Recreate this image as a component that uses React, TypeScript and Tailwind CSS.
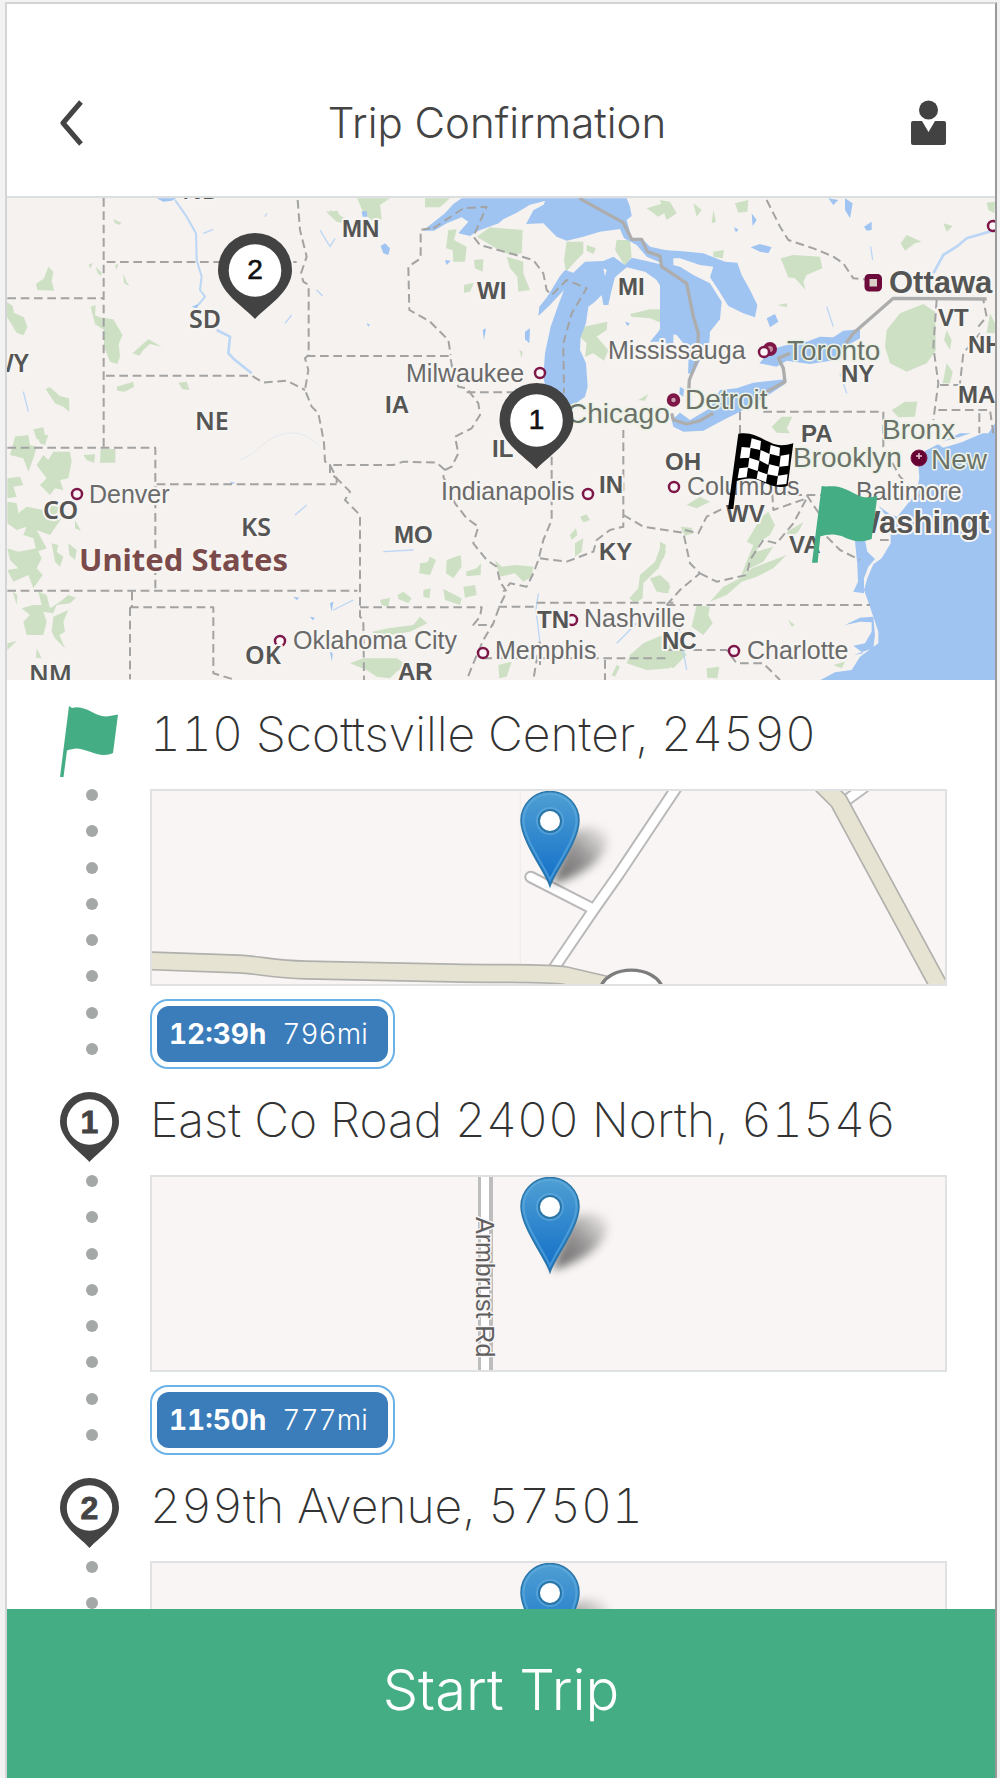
import { useId } from "react";

type Label = { t: string; x: number; y: number };

const statesSans: Label[] = [
  { t: "MN", x: 342, y: 237 },
  { t: "WI", x: 477, y: 299 },
  { t: "MI", x: 618, y: 295 },
  { t: "IA", x: 385, y: 413 },
  { t: "IL", x: 492, y: 457 },
  { t: "IN", x: 599, y: 493 },
  { t: "MO", x: 394, y: 543 },
  { t: "KY", x: 599, y: 560 },
  { t: "TN", x: 537, y: 628 },
  { t: "AR", x: 398, y: 680 },
  { t: "OH", x: 665, y: 470 },
  { t: "PA", x: 801, y: 442 },
  { t: "NY", x: 841, y: 382 },
  { t: "VT", x: 938, y: 326 },
  { t: "NH", x: 968, y: 353 },
  { t: "MA", x: 958, y: 403 },
  { t: "WV", x: 726, y: 522 },
  { t: "VA", x: 789, y: 553 },
  { t: "NC", x: 662, y: 649 },
];

const statesHumanist: Label[] = [
  { t: "ND", x: 182, y: 199 },
  { t: "SD", x: 189, y: 328 },
  { t: "NE", x: 195, y: 430 },
  { t: "WY", x: -10, y: 372 },
  { t: "CO", x: 43, y: 519 },
  { t: "KS", x: 241, y: 536 },
  { t: "OK", x: 245, y: 664 },
  { t: "NM", x: 29, y: 683 },
];

const cities: Label[] = [
  { t: "Milwaukee", x: 406, y: 382 },
  { t: "Mississauga", x: 608, y: 359 },
  { t: "Indianapolis", x: 441, y: 500 },
  { t: "Columbus", x: 687, y: 495 },
  { t: "Baltimore", x: 856, y: 500 },
  { t: "Denver", x: 89, y: 503 },
  { t: "Oklahoma City", x: 293, y: 649 },
  { t: "Memphis", x: 495, y: 659 },
  { t: "Nashville", x: 584, y: 627 },
  { t: "Charlotte", x: 747, y: 659 },
];

const bigCities: Label[] = [
  { t: "Chicago", x: 567, y: 423 },
  { t: "Toronto", x: 787, y: 360 },
  { t: "Detroit", x: 685, y: 409 },
  { t: "Brooklyn", x: 793, y: 467 },
  { t: "Bronx", x: 882, y: 439 },
  { t: "New", x: 931, y: 469 },
];

const rings: [number, number][] = [
  [540, 373],
  [588, 494],
  [674, 487],
  [77, 494],
  [280, 641],
  [483, 653],
  [572, 620],
  [734, 651],
  [993, 226],
];

const LAND = "#f5f2ef";
const WATER = "#9fc4f2";
const PARK = "#cde0c4";

function NumberPin({ x, y, n }: { x: number; y: number; n: string }) {
  return (
    <g transform={`translate(${x} ${y})`}>
      <path d="M0 49C-12 36-37 22-37 0A37 37 0 0 1 37 0C37 22 12 36 0 49Z" fill="#424242" />
      <circle cx="0" cy="0.5" r="26.3" fill="#fff" />
      <text x="0" y="9" textAnchor="middle" fontSize="28" fill="#111" stroke="#111" strokeWidth="0.6">
        {n}
      </text>
    </g>
  );
}

function OverviewMap() {
  return (
    <svg
      viewBox="7 198 988 482"
      className="block w-full font-['Liberation_Sans',sans-serif]"
      role="img"
      aria-label="Route overview map"
    >
      <rect x="0" y="190" width="1000" height="500" fill={LAND} />

      <g transform="scale(0.33333)">
        {/* Parks and forests */}
        <g fill={PARK}>
          <g transform="translate(0 570)">
            <path d="M145 230L160 245 155 275 163 302 112 300 108 282 132 265ZM20 335L38 348 42 368 72 382 82 412 70 436 50 428 30 395 20 380ZM272 350L287 345 285 375 298 382 340 388 368 435 356 462 360 500 352 522 330 515 312 470 312 420 285 402ZM398 490L425 465 445 448 485 470 450 462 430 480 418 497ZM340 88L365 98 358 104 345 100ZM265 225L278 218 272 235ZM288 230L305 248 303 258 292 248ZM370 250L380 275 388 288 372 280ZM345 225L355 222 350 240ZM137 597L150 592 180 618 207 625 208 665 190 650 165 640ZM350 590L400 575 402 590 375 605 352 602ZM535 578L560 575 568 600 548 598ZM100 718L130 712 137 745 110 748ZM978 65L1012 62 1030 100 1010 95ZM45 738L72 742 60 752Z" />
          </g>
          <g transform="translate(990 570)">
            <path d="M82 25L180 25 150 45 155 88 125 90 100 70ZM285 25L360 25 330 52 285 52ZM0 60L45 85 30 92 5 80ZM355 120L380 118 372 150 410 170 405 215 370 215 368 180 348 175ZM432 210L460 208 458 245 435 235ZM440 140L480 112 578 120 575 190 540 195 490 170ZM530 200L580 215 580 250 600 300 565 305 562 260 540 235ZM402 285L432 278 420 305 402 308ZM710 155L760 155 760 190 735 215 708 245 702 210ZM770 165L798 175 790 192 770 182ZM860 150L900 150 905 200 885 228 855 180ZM755 412L832 395 830 420 800 440 835 480 822 512 790 490 765 500 770 460 750 440ZM900 372L960 358 995 358 993 398 960 385 905 380ZM568 480L578 485 575 505ZM950 55L1000 40 1010 65 985 80ZM925 630L955 612 945 632Z" />
          </g>
          <g transform="translate(1980 570)">
            <path d="M362 205L400 195 480 200 487 235 440 255 430 275 437 300 405 265 385 262ZM722 160L740 135 785 155 765 160 735 182ZM680 420L720 370 790 342 825 365 828 480 800 520 740 545 690 520 675 470ZM225 40L265 30 262 65 235 68ZM850 100L878 108 860 125ZM980 38L1005 35 1003 70 985 60ZM160 185L192 180 188 205 160 200ZM0 350L15 370 12 400 0 405ZM860 420L875 450 870 480 852 450ZM860 520L878 545 870 580 848 580ZM990 370L1005 400 1005 430 980 428ZM695 660L735 635 772 635 765 680 715 682ZM335 710L365 680 397 680 380 715 390 730 350 728ZM352 345L382 340 380 352ZM0 30L30 35 50 70 20 90ZM100 40L125 60 110 80ZM160 60L168 95 155 100Z" />
          </g>
          <g transform="translate(0 1305)">
            <path d="M45 5L85 0 90 30 110 35 100 70 85 110 70 70 30 60ZM110 0L145 0 135 30 120 25ZM110 90L130 60 145 75 160 50 210 50 215 80 205 130 180 135 190 165 165 160 150 180 120 150 140 130ZM22 130L60 125 70 150 40 155 50 185 22 190ZM22 200L50 205 55 235 80 215 130 225 140 200 180 210 160 260 185 250 150 300 110 285 140 340 110 350 100 310 70 300 80 275 50 285 22 265ZM22 340L55 350 110 340 125 370 110 400 128 420 100 460 85 420 40 440 22 405 55 400 30 375ZM155 325L175 330 170 350 190 365 180 395 165 380ZM205 325L230 345 225 375 208 360ZM250 60L285 58 283 84 260 75ZM302 42L346 42 346 83 300 83ZM225 255L243 288 225 280ZM38 470L52 480 50 510ZM115 470L140 480 150 520 180 500 205 480 228 488 210 505 170 510 160 535 130 530 140 560 130 600 80 600 70 560 90 540 65 520 100 510 125 510ZM160 545L205 525 190 560 195 590 178 600 195 640 165 610 155 590ZM110 640L125 670 108 668ZM22 625L50 618 22 645Z" />
          </g>
          <g transform="translate(990 1305)">
            <path d="M270 385L292 382 300 365 318 375 300 420 268 415ZM350 375L392 360 395 395 370 430 348 415ZM408 410L440 400 453 385 452 420 410 424ZM400 455L435 450 440 480 405 488ZM340 462L395 490 390 510 345 495ZM280 465L302 460 298 490 280 485ZM203 480L220 470 245 490 235 505 205 492ZM150 495L180 488 175 515 155 510ZM495 375L515 395 560 390 610 395 605 425 580 440 555 415 510 425ZM720 300L738 280 742 300 725 315ZM735 325L760 310 755 350 735 365ZM750 245L770 238 780 255 760 262ZM60 685L100 670 200 670 230 690 200 710 180 730 140 725 110 705ZM128 590L175 580 250 570 270 545 292 565 240 590 180 600 130 598ZM505 690L545 680 530 725 508 730ZM930 420L975 380 995 325 1008 350 985 400 940 445 938 490 915 505 898 490 925 460ZM960 430L990 420 1018 445 1015 475 980 470ZM900 660L940 625 1020 590 1020 700 950 705 890 685ZM845 720L860 690 870 695 855 725Z" />
          </g>
          <g transform="translate(1980 1305)">
            <path d="M62 275L95 278 100 295 75 302ZM80 210L120 185 150 200 110 220ZM305 245L325 230 345 270 330 300 300 320 290 350 340 335 310 380 270 400 240 430 275 400 380 360 340 400 290 425 245 440 200 480 150 500 190 455 240 430 280 330 260 320ZM380 290L430 262 415 290 385 312ZM0 320L18 330 12 370 0 370ZM0 425L32 455 20 475 0 470ZM110 510L150 515 145 540 158 565 130 600 95 575ZM0 625L60 630 80 660 40 700 0 685ZM140 700L178 695 172 730 142 728ZM520 690L555 680 545 700ZM385 555L405 570 395 575Z" />
          </g>
        </g>

        {/* Lakes and ocean */}
        <g fill={WATER}>
          <g transform="translate(990 570)">
            <path d="M395 25L370 42 345 70 300 105 280 122 312 122 350 100 395 82 415 95 385 130 420 138 445 122 500 102 560 88 592 50 645 34 640 44 610 60 588 102 640 100 680 140 710 152 760 140 810 125 870 117 882 145 920 165 950 200 985 215 1030 240 1030 185 960 170 940 150 905 145 890 90 905 78 900 50 890 25Z" />
            <path d="M625 378L628 350 652 320 690 258 705 240 730 248 765 215 820 213 850 200 885 225 905 203 960 215 1030 232 1030 480 1005 455 960 455 985 425 1008 385 1010 320 980 270 945 245 890 232 855 262 845 300 835 345 820 345 815 315 795 335 775 350 768 400 752 440 750 480 768 520 773 590 765 620 735 642 715 690 660 660 640 560 645 490 662 410 685 345 702 300 660 345Z" />
            <path d="M152 168L165 160 180 175 175 195 160 190ZM95 65L110 62 112 80 98 80ZM585 425L600 415 598 460 585 448ZM458 420L468 415 462 450ZM345 210L362 212 350 225ZM110 400L120 404 115 410ZM885 395L900 400 892 408Z" />
            <path d="M820 235L830 240 825 258Z" fill={LAND} />
            <path d="M560 68L600 44 645 33 640 44 610 60 588 102 555 100 500 105 520 88Z" fill={LAND} />
          </g>
          <g transform="translate(1980 570)">
            <path d="M0 180L60 183 130 190 195 215 232 218 245 255 270 300 292 345 285 382 250 370 205 348 172 295 150 262 160 230 120 225 60 205 0 205Z" />
            <path d="M0 215L60 230 100 255 150 280 185 335 180 388 150 425 148 455 125 500 100 552 84 550 86 500 70 460 50 435 20 430 0 445Z" />
            <path d="M35 690L60 668 90 690 150 655 180 600 230 595 280 578 375 568 375 582 330 612 240 665 190 690 130 722 70 725 40 710Z" />
            <path d="M298 520L320 495 345 475 400 460 440 455 480 440 520 442 550 422 600 418 600 445 565 465 540 508 450 522 380 512 350 530ZM60 590L72 598 70 620 58 612Z" />
            <path d="M272 172L300 162 335 172 325 190 300 185ZM320 385L345 372 355 395 330 412ZM555 25L578 40 570 85 555 60ZM612 110L635 95 635 120 620 122ZM275 70L290 90 278 108ZM222 112L235 118 228 128ZM505 25L535 30 520 45Z" />
          </g>
          <g transform="translate(1980 1305)">
            <path d="M1005 -35L985 -5 900 -5 830 30 795 48 775 85 778 130 768 175 740 210 712 245 690 238 655 212 692 260 692 325 665 370 640 388 622 430 612 465 628 510 640 545 655 590 655 625 600 665 575 705 525 712 480 736 1010 736Z" />
            <path d="M583 295L587 340 592 390 594 440 580 470 612 475 612 430 625 395 645 372 622 350 612 300ZM555 570L600 560 635 562 635 590 615 625 580 632 610 655 580 660 640 640 645 600 640 545 600 548Z" />
          </g>
          <g transform="translate(0 1305)">
            <path d="M690 140L705 143 695 148ZM880 485L898 488 890 495ZM930 545L945 548 938 556ZM990 505L1000 500 995 530ZM990 650L998 655 996 680Z" />
          </g>
          <g transform="translate(0 570)">
            <path d="M470 25L530 25 515 32 490 35ZM575 350L600 340 590 355Z" />
          </g>
        </g>
        <g transform="translate(1980 1305)" fill={LAND}>
          <path d="M830 25L900 5 960 -15 975 -8 905 22 850 38Z" />
        </g>

        {/* Rivers */}
        <g fill="none" stroke="#bcd6f5" strokeWidth="6" strokeLinejoin="round">
          <path d="M525 600L560 650 588 700 590 780 605 830 600 870 615 890 595 915" />
          <path d="M650 990L690 1010 685 1060 705 1080 755 1120" strokeWidth="8" />
          <path d="M2800 820L2830 765 2870 740 2900 715 2985 690" strokeWidth="8" />
          <path d="M610 700L640 688M800 640L795 650M960 690L990 740 1005 715M855 970L875 945M70 1175L85 1235M950 870L968 888M1615 1780L1608 1830 1620 1930M1850 1930L1920 1860M1000 1830L1060 1800M1150 1655L1240 1650M885 1545L920 1515M2035 1875L2060 2010M2612 740L2618 780M2480 920L2500 980M2520 1120L2540 1180" strokeWidth="4" />
          <path d="M720 1380C780 1360 790 1310 860 1300C900 1295 930 1310 960 1340" stroke="#e3e9ef" strokeWidth="3" />
        </g>

        {/* National border */}
        <g fill="none" stroke="#adadad" strokeWidth="10" strokeLinejoin="round">
          <path d="M1738 595L1870 668 1895 718 1925 718 1942 755 1980 768 1985 800 2060 850 2080 950 2095 1000 2092 1080 2068 1140 2065 1200" />
          <path d="M2015 1240L2020 1260 2060 1272 2100 1262 2140 1240" />
          <path d="M2300 1175L2355 1145 2350 1105 2335 1075 2370 1060" />
          <path d="M2538 1030L2560 1000 2680 895 2960 897" />
        </g>

        {/* State borders */}
        <g fill="none" stroke="#a3a3a3" strokeWidth="6" strokeDasharray="26 14" strokeLinejoin="round">
          <path d="M311 594V1340M22 895H311M320 786H890M318 1127H755L790 1148 860 1142 915 1170" />
          <path d="M893 600L900 690 920 770 903 820 910 845 926 855V1065L915 1075 925 1110 915 1170 935 1220 955 1240 965 1290 972 1330 975 1385 990 1390V1420L1010 1435 1010 1452" />
          <path d="M920 1068H1350L1362 1130 1375 1160 1400 1165 1435 1210 1440 1245 1415 1285 1365 1310 1375 1360 1355 1400 1335 1410 1330 1430 1365 1510 1400 1555 1435 1580 1420 1630 1460 1680 1490 1700 1500 1745 1520 1775 1500 1815 1480 1870 1450 1920 1420 1990 1400 2040" />
          <path d="M1290 685L1262 690V775L1225 800 1228 930 1290 965 1345 1020 1352 1065" />
          <path d="M1300 685L1390 625 1460 620 1420 710 1440 735 1530 760 1600 780 1630 820 1640 870 1655 885 1700 840 1760 865 1715 940 1690 1030 1692 1180M1400 1177H1640" />
          <path d="M22 1343H466V1772M470 1453H1010M22 1772H1072M396 1775V1820M390 1822H640V2020L700 2038M390 1822V2038" />
          <path d="M990 1395L1010 1435 1050 1475 1035 1500 1080 1545V1850L1090 1860 1092 2040M1000 1395H1180L1210 1385 1310 1388 1335 1410" />
          <path d="M1080 1822H1445L1440 1850 1420 1875 1480 1875M1495 1820H1610M1610 1808L2020 1808M1620 1995V1920L1610 1980 1600 2040M1450 1975H2000" />
          <path d="M1655 1370V1560L1630 1620 1615 1680 1600 1720 1580 1760 1530 1750 1510 1775M1620 1675L1700 1685 1780 1655 1790 1620 1830 1590 1870 1580V1290" />
          <path d="M1870 1545L1930 1580 2050 1598 2070 1690 2100 1720 2040 1770 2000 1815M2055 1590L2095 1600 2120 1550 2190 1515M2100 1720L2150 1745 2240 1725 2250 1680 2290 1620 2330 1630 2380 1570 2420 1495 2320 1530 2310 1370" />
          <path d="M2000 1815H2610M2220 1235V1300M2290 1235H2650V1340L2700 1430 2770 1500M2420 1485L2460 1545M2340 1485H2540M2480 1610L2520 1650 2580 1680M2640 1620H2680" />
          <path d="M2300 600L2340 680 2365 720 2440 745 2500 770 2530 790 2560 835 2610 840M2810 900L2800 1040 2815 1150 2800 1260M2820 1155H2900M2815 1230H2970L2980 1300M2940 1000L2890 1060 2880 1150M2935 980L2960 950 2950 900M2938 1240V1300" />
          <path d="M1815 1980V2040M2000 1950H2180L2210 1990 2290 1990 2340 2040" />
        </g>
      </g>

      {/* City dots */}
      <g fill="#fbf5f7" stroke="#7d1748" strokeWidth="2.5">
        {rings.map(([x, y]) => (
          <circle key={`${x}-${y}`} cx={x} cy={y} r="5" />
        ))}
        <circle cx="770" cy="349" r="5" fill="#c48a9f" strokeWidth="4" />
        <circle cx="764" cy="352" r="5" />
        <circle cx="673.500" cy="400" r="4.500" fill="#c9a3b2" strokeWidth="4.500" />
        <circle cx="919" cy="458" r="8" fill="#660033" strokeWidth="1" />
        <path d="M916 456h6M919 453v6" stroke="#e7c6d3" strokeWidth="1.500" />
        <rect x="867" y="276.500" width="12.500" height="12.500" rx="2" fill="#d8cfc8" stroke="#6b0a3b" strokeWidth="5" />
      </g>

      {/* Labels */}
      <g stroke="#f7f5f2" strokeWidth="4" strokeLinejoin="round" className="[paint-order:stroke]">
        <g fontSize="25" fill="#6a6a6a">
          {cities.map((l) => (
            <text key={l.t} x={l.x} y={l.y}>{l.t}</text>
          ))}
        </g>
        <g fontSize="28" fill="#6b726a" stroke="#edf2e6" strokeWidth="3">
          {bigCities.map((l) => (
            <text key={l.t} x={l.x} y={l.y}>{l.t}</text>
          ))}
        </g>
        <g fontSize="24" fontWeight="700" fill="#555">
          {statesSans.map((l) => (
            <text key={l.t} x={l.x} y={l.y}>{l.t}</text>
          ))}
        </g>
        <g fontSize="25" fontWeight="600" fill="#555" className="font-['Noto_Sans',sans-serif]">
          {statesHumanist.map((l) => (
            <text key={l.t} x={l.x} y={l.y}>{l.t}</text>
          ))}
        </g>
        <g fontSize="31" fontWeight="700" fill="#555">
          <text x="889" y="293">Ottawa</text>
          <text x="851" y="533">Washingt</text>
        </g>
        <text x="79" y="571" fontSize="31" fontWeight="700" fill="#7b4b4b" className="font-['Noto_Sans',sans-serif]">
          United States
        </text>
      </g>

      <NumberPin x={255} y={270} n="2" />
      <NumberPin x={536.500} y={420} n="1" />

      <g transform="translate(660 435) scale(0.33333)">
        <path d="M235 -4C280 -10 300 10 330 22C355 35 375 32 400 25L383 152C355 162 335 152 310 142C280 125 255 130 230 138L220 222H204Z" fill="#000" />
        <path
          d="M275 10L303 18 300 45 270 38ZM332 30L360 38 358 64 328 56ZM245 36L272 38 268 68 240 70ZM302 45L330 58 325 90 298 76ZM362 62L388 58 385 92 358 95ZM268 68L298 78 293 108 264 98ZM328 88L358 95 353 124 322 118ZM238 100L264 97 260 127 233 130ZM294 108L322 118 318 142 290 131ZM354 122L383 118 379 147 350 150Z"
          fill="#fff"
        />
        <path d="M485 153C500 157 520 150 545 158C580 170 600 190 628 187L652 184 635 312C600 325 575 318 545 303C520 295 500 298 481 304L473 383H456Z" fill="#44ad84" />
      </g>
    </svg>
  );
}

function FlagIcon() {
  return (
    <svg viewBox="0 0 59 71" className="block h-[71px] w-[59px]" role="img" aria-label="Start">
      <path
        d="M9 0L12 2C27-2 35 13 50 10L58 8.500 53 47C40 53 28 43 17 42.500C13 42.500 10 43.500 7 44.500L3.500 71H0Z"
        fill="#44ad84"
      />
    </svg>
  );
}

function StopPin({ n }: { n: string }) {
  return (
    <svg
      viewBox="0 0 60 71"
      className="block h-[71px] w-[60px] font-['Liberation_Sans',sans-serif]"
      role="img"
      aria-label={`Stop ${n}`}
    >
      <path d="M29.500 70C22 61 0 48 0 29.500A29.500 29.500 0 0 1 59 29.500C59 48 37 61 29.500 70Z" fill="#444" />
      <circle cx="29.500" cy="30" r="22.700" fill="#fff" />
      <text x="29.500" y="41" textAnchor="middle" fontSize="32" fontWeight="700" fill="#444" stroke="#444" strokeWidth="0.8">
        {n}
      </text>
    </svg>
  );
}

function BluePin() {
  const id = useId();
  return (
    <g transform="translate(398 0)">
      <defs>
        <linearGradient id={`${id}g`} x1="0" y1="0" x2="0" y2="1">
          <stop offset="0" stopColor="#4f9fd3" />
          <stop offset="1" stopColor="#126fc8" />
        </linearGradient>
        <linearGradient id={`${id}s`} x1="0" y1="1" x2="1" y2="0">
          <stop offset="0" stopColor="#000" stopOpacity="0.6" />
          <stop offset="0.5" stopColor="#000" stopOpacity="0.4" />
          <stop offset="1" stopColor="#000" stopOpacity="0" />
        </linearGradient>
        <filter id={`${id}b`} x="-40%" y="-40%" width="180%" height="180%">
          <feGaussianBlur stdDeviation="5" />
        </filter>
      </defs>
      <path d="M2 93L18 48C28 30 60 34 58 50C54 72 26 87 2 93Z" fill={`url(#${id}s)`} filter={`url(#${id}b)`} />
      <path
        d="M0 95C-4 82-29 50-29 29.500A29 29 0 0 1 29 29.500C29 50 4 82 0 95Z"
        fill={`url(#${id}g)`}
        stroke="#2b76a8"
        strokeWidth="1.500"
      />
      <path d="M0 89C-5 76-26.500 48-26.500 29.500A26.500 26.500 0 0 1 26.500 29.500C26.500 48 5 76 0 89Z" fill="none" stroke="#62aee0" strokeOpacity="0.6" strokeWidth="2" />
      <circle cx="0" cy="30" r="13" fill="none" stroke="#62aee0" strokeOpacity="0.6" strokeWidth="2" />
      <circle cx="0" cy="30" r="11" fill="#fff" stroke="#2b76a8" strokeWidth="2" />
    </g>
  );
}

function ScottsvilleRoads() {
  return (
    <g transform="scale(0.33333)" fill="none" strokeLinejoin="round">
      <path d="M1105 0V580" stroke="#ececea" strokeWidth="3" />
      <g stroke="#b9b9b9" strokeWidth="38" strokeLinecap="round">
        <path d="M1580 -20L1400 250 1326 355 1200 540M1326 355L1136 258M2080 30L2135 -10" />
      </g>
      <g stroke="#fff" strokeWidth="26" strokeLinecap="round">
        <path d="M1580 -20L1400 250 1326 355 1200 540M1326 355L1136 258M2080 30L2135 -10" />
      </g>
      <g stroke="#b0b0ac" strokeWidth="58">
        <path d="M-20 509L260 519C320 522 370 535 460 537L900 546C1050 549 1190 545 1240 554L1420 596M2000 -30L2060 30 2160 215 2390 640" />
      </g>
      <g stroke="#e6e3d2" strokeWidth="48">
        <path d="M-20 509L260 519C320 522 370 535 460 537L900 546C1050 549 1190 545 1240 554L1420 596M2000 -30L2060 30 2160 215 2390 640" />
      </g>
      <path d="M1345 590C1370 520 1505 520 1532 590Z" fill="#fff" stroke="#7d7d7d" strokeWidth="10" />
    </g>
  );
}

function ArmbrustRoad() {
  return (
    <g>
      <rect x="326" y="-2" width="15" height="200" fill="#bdbdbd" />
      <rect x="329" y="-2" width="8" height="200" fill="#fff" />
      <text
        transform="translate(324 40) rotate(90)"
        fontSize="25"
        fill="#5f5f5f"
        stroke="#f9f5f5"
        strokeWidth="3"
        className="font-['Liberation_Sans',sans-serif] [paint-order:stroke]"
      >
        Armbrust Rd
      </text>
    </g>
  );
}

type Stop = {
  address: string;
  marker: React.ReactNode;
  roads?: React.ReactNode;
  time: string;
  miles: string;
};

const stops: Stop[] = [
  { address: "110 Scottsville Center, 24590", marker: <FlagIcon />, roads: <ScottsvilleRoads />, time: "12:39h", miles: "796mi" },
  { address: "East Co Road 2400 North, 61546", marker: <StopPin n="1" />, roads: <ArmbrustRoad />, time: "11:50h", miles: "777mi" },
  { address: "299th Avenue, 57501", marker: <StopPin n="2" />, time: "", miles: "" },
];

function StopItem({ stop }: { stop: Stop }) {
  return (
    <li className="flex pb-[23px]">
      <div className="flex w-[90px] shrink-0 flex-col">
        {stop.marker}
        <div className="mt-3 ml-[26px] flex h-[266px] flex-col justify-between" aria-hidden="true">
          {Array.from({ length: 8 }, (_, i) => (
            <span key={i} className="size-3 rounded-full bg-[#a4a8a6]" />
          ))}
        </div>
      </div>
      <div className="min-w-0 flex-1">
        <h2 className="text-[48px] leading-[56px] font-extralight whitespace-nowrap text-[#333] tabular-nums">
          {stop.address}
        </h2>
        <div className="mt-[27px] h-[197px] border-2 border-[#dfe1e2] bg-[#f9f5f5]">
          <svg
            viewBox="0 0 793 193"
            preserveAspectRatio="xMidYMid slice"
            className="block size-full"
            role="img"
            aria-label={`Map of ${stop.address}`}
          >
            {stop.roads}
            <BluePin />
          </svg>
        </div>
        {stop.time && (
          <div className="mt-[13px] inline-block rounded-[18px] border-2 border-[#6cb2e6] bg-white p-[5px] align-top">
            <button
              type="button"
              className="flex h-14 items-center gap-4 rounded-xl bg-[#3b7cba] pr-5 pl-3 text-[28px] text-white tabular-nums"
            >
              <span className="font-bold">{stop.time}</span>
              <span className="font-light">{stop.miles}</span>
            </button>
          </div>
        )}
      </div>
    </li>
  );
}

export default function App() {
  return (
    <div className="h-screen bg-[#f2f2f2] pt-[2px] pr-[3px] pl-[5px] font-['Inter',sans-serif]">
      <div className="flex h-full flex-col border-t-2 border-r-2 border-l-2 border-t-[#d2d4d4] border-r-[#999] border-l-[#d2d4d6] bg-white">
        <header className="flex h-[194px] shrink-0 items-end justify-between border-b-2 border-[#dcdfe0] pr-[48px] pb-[50px] pl-[53px]">
          <button type="button" aria-label="Back" className="block">
            <svg viewBox="0 0 24 46" className="block h-[46px] w-6" fill="none" stroke="#444" strokeWidth="5">
              <path d="M21 2L3 23L21 44" strokeLinejoin="round" />
            </svg>
          </button>
          <h1 className="text-[42px] leading-[46px] font-light text-[#444]">Trip Confirmation</h1>
          <button type="button" aria-label="Profile" className="block">
            <svg viewBox="0 0 37 46" className="block h-[46px] w-[37px]" fill="#424242">
              <circle cx="18.500" cy="10" r="9.500" />
              <path d="M3 21H12L18.500 32L25 21H34Q36 21 36 23V43Q36 45 34 45H3Q1 45 1 43V23Q1 21 3 21Z" />
            </svg>
          </button>
        </header>

        <main className="min-h-0 flex-1 overflow-hidden">
          <OverviewMap />
          <ol className="pt-[26px] pr-[48px] pl-[53px]">
            {stops.map((s) => (
              <StopItem key={s.address} stop={s} />
            ))}
          </ol>
        </main>

        <button
          type="button"
          className="h-[169px] w-full shrink-0 bg-[#44ad84] pb-2 text-[56px] font-light text-white"
        >
          Start Trip
        </button>
      </div>
    </div>
  );
}
